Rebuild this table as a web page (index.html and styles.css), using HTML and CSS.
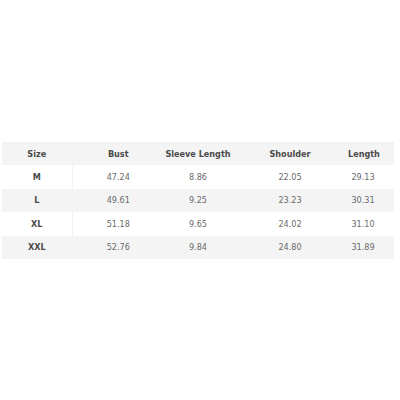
FILE: index.html
```html
<!DOCTYPE html>
<html>
<head>
<meta charset="utf-8">
<link rel="stylesheet" href="styles.css">
</head>
<body>
<div class="page">
<table class="sizes">
  <colgroup>
    <col class="c1"><col class="c2"><col class="c3"><col class="c4"><col class="c5">
  </colgroup>
  <tr class="head"><th>Size</th><th>Bust</th><th>Sleeve Length</th><th>Shoulder</th><th class="last">Length</th></tr>
  <tr><th>M</th><td>47.24</td><td>8.86</td><td>22.05</td><td class="last">29.13</td></tr>
  <tr class="alt"><th>L</th><td>49.61</td><td>9.25</td><td>23.23</td><td class="last">30.31</td></tr>
  <tr><th>XL</th><td>51.18</td><td>9.65</td><td>24.02</td><td class="last">31.10</td></tr>
  <tr class="alt"><th>XXL</th><td>52.76</td><td>9.84</td><td>24.80</td><td class="last">31.89</td></tr>
</table>
</div>
</body>
</html>
```

FILE: styles.css
```css
html, body {
  margin: 0;
  padding: 0;
  background: #ffffff;
}
.page {
  width: 400px;
  height: 400px;
  padding-top: 142px;
  padding-left: 2px;
  box-sizing: border-box;
}
.sizes {
  width: 392px;
  border-collapse: collapse;
  table-layout: fixed;
  font-family: "DejaVu Sans Condensed", "DejaVu Sans", sans-serif;
  font-size: 9px;
}
.c1 { width: 70px; }
.c2 { width: 92px; }
.c3 { width: 68px; }
.c4 { width: 116px; }
.c5 { width: 46px; }
.sizes th, .sizes td {
  height: 23.4px;
  padding: 0;
  text-align: center;
  vertical-align: middle;
}
.sizes th:first-child {
  border-right: 1px solid #f3f3f3;
}
.sizes th {
  font-weight: bold;
  color: #4a4a4a;
}
.sizes td {
  color: #6a6a6a;
}
.sizes .last {
  padding-right: 16px;
}
.head, .alt {
  background: #f4f4f4;
}
```
